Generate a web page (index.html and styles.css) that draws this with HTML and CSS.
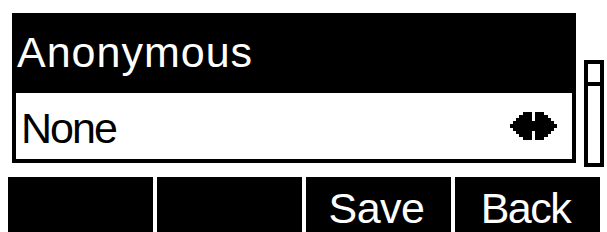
FILE: index.html
```html
<!DOCTYPE html>
<html>
<head>
<meta charset="utf-8">
<link rel="stylesheet" href="styles.css">
</head>
<body>
<div class="screen">
  <div class="top">
    <div class="panel">
      <div class="title">Anonymous</div>
      <div class="field">
        <span class="value">None</span>
        <svg class="arrows" width="47" height="30" viewBox="0 0 15 9" shape-rendering="crispEdges">
          <path fill="#000" d="M4 0h3v1h-3zM8 0h3v1h-3zM3 1h4v1h-4zM8 1h4v1h-4zM2 2h5v1h-5zM8 2h5v1h-5zM1 3h13v1h-13zM0 4h15v1h-15zM1 5h13v1h-13zM2 6h5v1h-5zM8 6h5v1h-5zM3 7h4v1h-4zM8 7h4v1h-4zM4 8h3v1h-3zM8 8h3v1h-3z"/>
        </svg>
      </div>
    </div>
    <div class="scroll">
      <div class="slot slot-top"></div>
      <div class="slot slot-rest"></div>
    </div>
  </div>
  <div class="softkeys">
    <div class="key"></div>
    <div class="key"></div>
    <div class="key">Save</div>
    <div class="key key-back">Back</div>
  </div>
</div>
</body>
</html>
```
FILE: styles.css
```css
html, body {
  margin: 0;
  padding: 0;
  background: #ffffff;
}
body {
  width: 607px;
  height: 232px;
  overflow: hidden;
  font-family: "Liberation Sans", Arial, sans-serif;
}
.screen {
  padding-top: 13px;
}
.top {
  display: flex;
  align-items: flex-start;
  padding-left: 12px;
}
.panel {
  width: 564px;
  height: 150px;
  box-sizing: border-box;
  background: #000;
  padding: 0 4px 4px 4px;
  display: flex;
  flex-direction: column;
}
.title {
  height: 80px;
  box-sizing: border-box;
  padding-top: 18px;
  padding-left: 1px;
  color: #fff;
  font-size: 43px;
  line-height: 43px;
  letter-spacing: 1px;
  white-space: nowrap;
}
.field {
  height: 66px;
  background: #fff;
  box-sizing: border-box;
  padding: 0 15px 0 5px;
  display: flex;
  align-items: center;
  justify-content: space-between;
}
.value {
  color: #000;
  font-size: 43px;
  line-height: 43px;
  padding-top: 4px;
  letter-spacing: -2px;
}
.arrows {
  display: block;
}
.scroll {
  margin-left: 8px;
  margin-top: 47px;
  width: 20px;
  height: 107px;
  box-sizing: border-box;
  border: 4px solid #000;
  background: #000;
  display: flex;
  flex-direction: column;
  gap: 4px;
}
.slot {
  background: #fff;
}
.slot-top {
  height: 18px;
}
.slot-rest {
  flex: 1;
}
.softkeys {
  margin-top: 10px;
  padding-left: 8px;
  width: 592px;
  display: grid;
  grid-template-columns: repeat(4, 145px);
  gap: 4px;
}
.key {
  height: 57px;
  box-sizing: border-box;
  background: #000;
  color: #fff;
  font-size: 43px;
  line-height: 43px;
  padding-top: 10px;
  padding-right: 4px;
  text-align: center;
  letter-spacing: -0.5px;
}
.key-back {
  letter-spacing: -1.5px;
}
```
